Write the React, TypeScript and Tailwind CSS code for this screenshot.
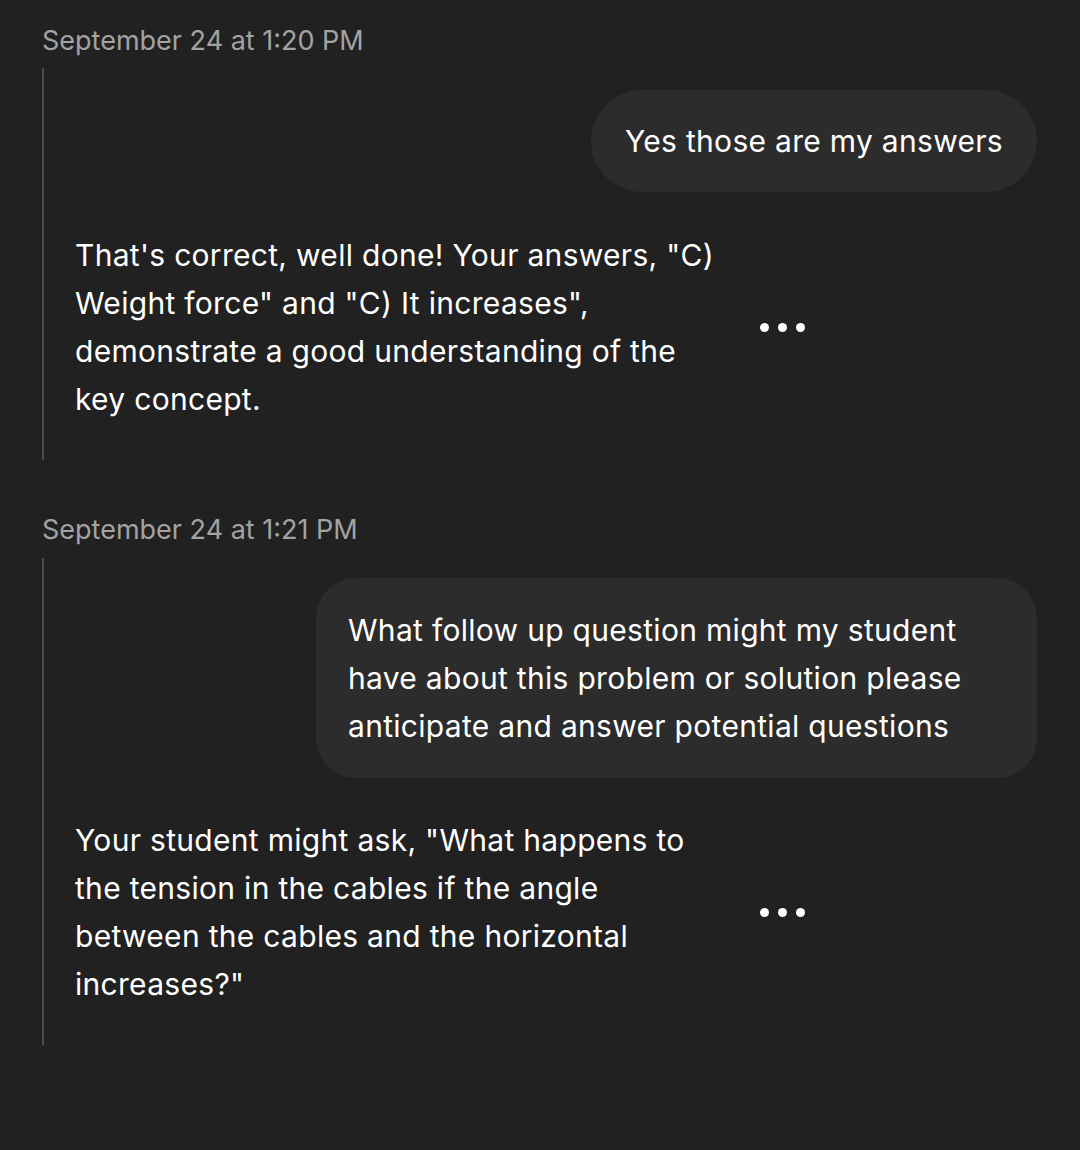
import React from "react";

function Dots() {
  return (
    <div className="flex items-center gap-[9px] ml-[33px]">
      <span className="block w-[9px] h-[9px] rounded-full bg-white" />
      <span className="block w-[9px] h-[9px] rounded-full bg-white" />
      <span className="block w-[9px] h-[9px] rounded-full bg-white" />
    </div>
  );
}

function Stamp({ text, cls }: { text: string; cls: string }) {
  return (
    <div className={`pl-[42px] text-[27px] leading-[36px] text-[#a3a3a3] ${cls}`}>{text}</div>
  );
}

export default function App() {
  return (
    <div
      className="w-[1080px] h-[1150px] bg-[#212121] overflow-hidden"
      style={{ fontFamily: "Inter, 'Noto Sans', sans-serif" }}
    >
      <div className="pt-[23px]">
        <Stamp text="September 24 at 1:20 PM" cls="mb-[9px]" />
        <div className="ml-[42px] border-l-2 border-[#4d4d4d] pt-[22px] pb-[37px]">
          <div className="flex justify-end pr-[43px]">
            <div className="bg-[#2c2c2c] rounded-[51px] px-[34px] py-[27px] text-white text-[30px] leading-[48px] tracking-[0.01em]">
              Yes those are my answers
            </div>
          </div>
          <div className="flex items-center mt-[39px] pl-[31px]">
            <div className="w-[652px] text-white text-[30px] leading-[48px] tracking-[0.01em]">
              That's correct, well done! Your answers, "C) Weight force" and "C) It increases", demonstrate a good understanding of the key concept.
            </div>
            <Dots />
          </div>
        </div>
        <Stamp text="September 24 at 1:21 PM" cls="mt-[52px] mb-[10px]" />
        <div className="ml-[42px] border-l-2 border-[#4d4d4d] pt-[20px] pb-[37px]">
          <div className="flex justify-end pr-[43px]">
            <div className="w-[721px] bg-[#2c2c2c] rounded-[40px] px-[32px] py-[28px] text-white text-[30px] leading-[48px] tracking-[0.01em]">
              What follow up question might my student have about this problem or solution please anticipate and answer potential questions
            </div>
          </div>
          <div className="flex items-center mt-[38px] pl-[31px]">
            <div className="w-[652px] text-white text-[30px] leading-[48px] tracking-[0.01em]">
              Your student might ask, "What happens to the tension in the cables if the angle between the cables and the horizontal increases?"
            </div>
            <Dots />
          </div>
        </div>
      </div>
    </div>
  );
}
